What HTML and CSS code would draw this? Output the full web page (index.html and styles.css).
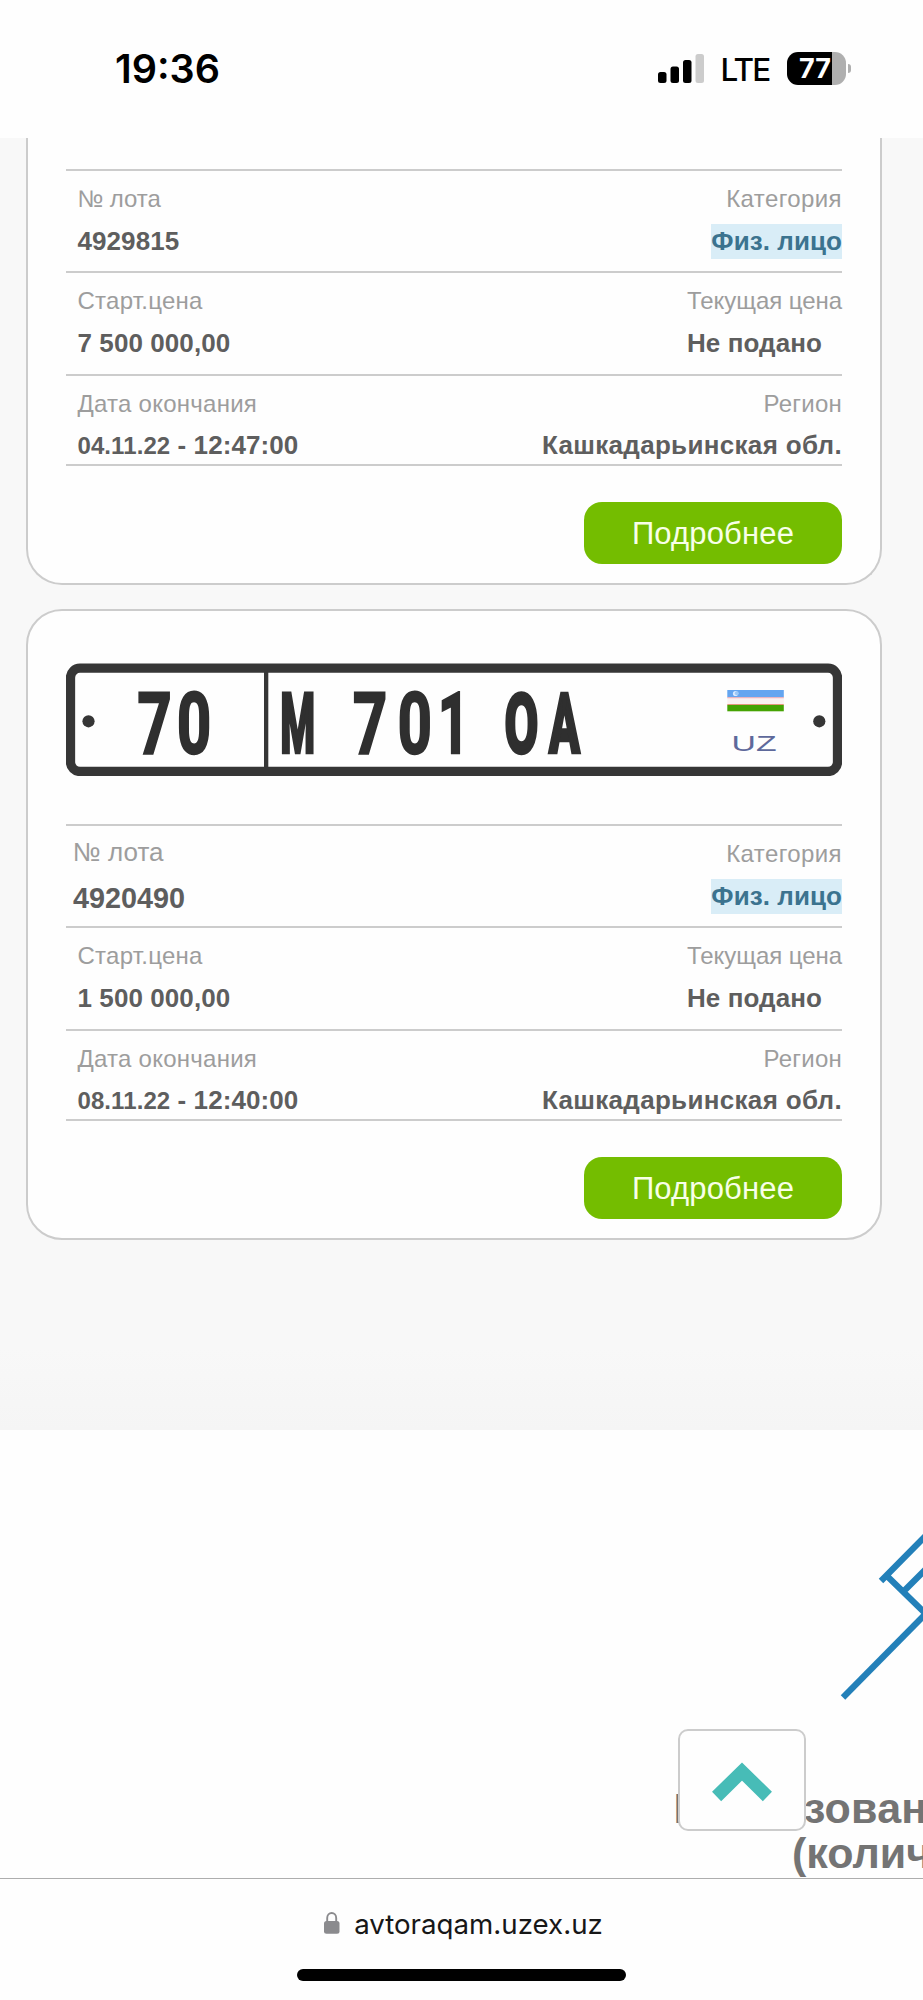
FILE: index.html
```html
<!DOCTYPE html>
<html lang="ru">
<head>
<meta charset="utf-8">
<title>avtoraqam.uzex.uz</title>
<link rel="stylesheet" href="styles.css">
</head>
<body>
<div class="phone">
  <header class="status">
    <span class="time">19:36</span>
    <div class="status-right">
      <svg class="signal" width="46" height="29" viewBox="0 0 46 29"><rect x="0" y="18" width="8.5" height="11" rx="2.5"/><rect x="12.5" y="12.500" width="8.500" height="16.500" rx="2.500"/><rect x="25" y="6" width="8.500" height="23" rx="2.500"/><rect x="37.500" y="0" width="8.500" height="29" rx="2.500" fill="#ccc"/></svg>
      <span class="lte">LTE</span>
      <div class="battery"><span class="battery-level">77</span></div>
      <div class="battery-nub"></div>
    </div>
  </header>

  <main class="lots">
    <article class="card card-first">
      <div class="row">
        <div class="cell"><span class="label snug">№ лота</span><b class="value">4929815</b></div>
        <div class="cell right"><span class="label wide">Категория</span><b class="value"><mark>Физ. лицо</mark></b></div>
      </div>
      <div class="row">
        <div class="cell"><span class="label">Старт.цена</span><b class="value">7 500 000,00</b></div>
        <div class="cell right"><span class="label snug">Текущая цена</span><b class="value inset">Не подано</b></div>
      </div>
      <div class="row row-last">
        <div class="cell"><span class="label">Дата окончания</span><b class="value"><span class="date">04.11.22</span> - 12:47:00</b></div>
        <div class="cell right"><span class="label">Регион</span><b class="value wide">Кашкадарьинская обл.</b></div>
      </div>
      <a class="more">Подробнее</a>
    </article>

    <article class="card card-full">
      <svg class="plate" width="776" height="113" viewBox="66 663 776 113">
        <rect x="70.500" y="668.200" width="767" height="103.300" rx="9.500" fill="#fefefe" stroke="#363636" stroke-width="9.300"/>
        <rect x="264" y="672" width="4.300" height="95" fill="#363636"/>
        <circle cx="88.500" cy="721.300" r="6.100" fill="#363636"/>
        <circle cx="819.300" cy="721.300" r="6.100" fill="#363636"/>
        <g class="plate-text">
          <text transform="translate(154.500 753.200) scale(.7 1)">7</text>
          <text transform="translate(194 753.200) scale(.7 1)">0</text>
          <text class="heavy" transform="translate(297.700 752) scale(.48 1)">M</text>
          <text transform="translate(370 753.200) scale(.7 1)">7</text>
          <text transform="translate(414.700 753.200) scale(.7 1)">0</text>
          <text transform="translate(453.500 753.200) scale(.64 1)">1</text>
          <text class="heavy" transform="translate(521.500 752) scale(.59 1)">O</text>
          <text class="heavy" transform="translate(564.300 752) scale(.55 1)">A</text>
        </g>
        <rect x="727.300" y="690" width="56.500" height="7.500" fill="#64a5f0"/>
        <circle cx="735.500" cy="693.500" r="2.600" fill="#d9eaff"/><circle cx="736.800" cy="693.300" r="2" fill="#9cc8f8"/>
        <rect x="727.300" y="697.300" width="56.500" height="7.200" fill="#fbf1f1"/>
        <rect x="727.300" y="697.200" width="56.500" height="1" fill="#e9a8b4"/>
        <rect x="727.300" y="704" width="56.500" height="1" fill="#e5967c"/>
        <rect x="727.300" y="705" width="56.500" height="6.300" fill="#45a303"/>
        <text class="uz" x="731.500" y="750.500" textLength="45" lengthAdjust="spacingAndGlyphs">UZ</text>
      </svg>
      <div class="row">
        <div class="cell large"><span class="label">№ лота</span><b class="value">4920490</b></div>
        <div class="cell right"><span class="label wide">Категория</span><b class="value"><mark>Физ. лицо</mark></b></div>
      </div>
      <div class="row">
        <div class="cell"><span class="label">Старт.цена</span><b class="value">1 500 000,00</b></div>
        <div class="cell right"><span class="label snug">Текущая цена</span><b class="value inset">Не подано</b></div>
      </div>
      <div class="row row-last">
        <div class="cell"><span class="label">Дата окончания</span><b class="value"><span class="date">08.11.22</span> - 12:40:00</b></div>
        <div class="cell right"><span class="label">Регион</span><b class="value wide">Кашкадарьинская обл.</b></div>
      </div>
      <a class="more">Подробнее</a>
    </article>
  </main>

  <section class="stats">
    <svg class="hammer" width="85" height="170" viewBox="838 1530 85 170" fill="none" stroke="#2380b9" stroke-width="6.300"><path d="M881 1581 926 1535.500M887 1576 926 1614M904 1591 926 1569" /><path d="M926 1613.500 843 1697.500"/></svg>
    <div class="caption"><span class="caption-first">Реализован</span><span class="caption-second">(колич</span></div>
    <a class="to-top"><svg width="62" height="43" viewBox="0 0 62 43"><path d="M5.600 35.500 31 10.500 56.400 35.500" fill="none" stroke="#47bcb7" stroke-width="13"/></svg></a>
  </section>

  <footer class="browser">
    <div class="address">
      <svg width="16" height="22" viewBox="0 0 16 22"><rect x="0" y="9" width="15.500" height="12.700" rx="2.500" fill="#8b8b8e"/><path d="M3.200 10V6a4.500 5 0 0 1 9 0v4" fill="none" stroke="#8b8b8e" stroke-width="1.900"/></svg>
      <span>avtoraqam.uzex.uz</span>
    </div>
    <div class="home"></div>
  </footer>
</div>
</body>
</html>
```
FILE: styles.css
```css
* { box-sizing: border-box; }
body { margin: 0; background: #fefefe; font-family: "Liberation Sans", Arial, sans-serif; }
.phone { width: 923px; height: 2000px; overflow: hidden; display: flex; flex-direction: column; background: #fefefe; }

.status { height: 138px; flex: none; display: flex; justify-content: space-between; padding: 46px 72px 0 115px; font-family: Inter, sans-serif; color: #000; }
.time { font-size: 39.500px; line-height: 47px; font-weight: 600; }
.status-right { display: flex; align-items: flex-start; }
.signal { margin-top: 8px; }
.lte { font-size: 31.500px; line-height: 46px; letter-spacing: -1.800px; margin: 1px 0 0 17px; width: 66.500px; font-weight: 500; }
.battery { width: 59px; height: 33px; margin-top: 6px; border-radius: 11px; background: linear-gradient(90deg, #000 45.500px, #afafaf 45.500px); display: flex; }
.battery-level { color: #fff; font-size: 27px; line-height: 33px; font-weight: 700; padding-left: 12px; }
.battery-nub { width: 3px; height: 9px; margin: 18px 0 0 2px; border-radius: 0 4px 4px 0; background: #afafaf; }

.lots { height: 1292px; flex: none; padding: 0 41px 0 26px; background: linear-gradient(#f8f8f8 1210px, #f5f5f5); }
.card { background: #fefefe; border: 2px solid #ccc; padding: 0 38px; display: flex; flex-direction: column; }
.card-first { height: 447px; border-top: 0; border-radius: 0 0 36px 36px; padding-top: 31px; margin-bottom: 24px; }
.card-full { height: 631px; border-radius: 36px; padding-top: 52px; }
.plate { display: block; margin-bottom: 48px; flex: none; }
.plate-text { font-family: Roboto, sans-serif; font-weight: 700; font-size: 85px; text-anchor: middle; fill: #2f2f2f; stroke: #2f2f2f; stroke-width: 2.400px; }
.plate-text .heavy { font-size: 82px; stroke-width: 4.600px; }
.uz { font-family: "Liberation Sans", sans-serif; font-size: 22px; fill: #5e699b; }

.row { height: 102.300px; flex: none; border-top: 2px solid #ccc; display: flex; justify-content: space-between; }
.row-last { height: 92.500px; border-bottom: 2px solid #ccc; }
.cell { display: flex; flex-direction: column; padding: 12px 0 0 11.500px; white-space: nowrap; }
.right { align-items: flex-end; padding-left: 0; }
.label { font-size: 24px; line-height: 32px; letter-spacing: .25px; color: #9d9d9d; }
.label.snug { letter-spacing: -.05px; }
.label.wide { letter-spacing: .4px; }
.value { font-size: 26px; line-height: 34px; letter-spacing: .08px; margin-top: 8.500px; color: #5e5e5e; }
.value.wide { letter-spacing: .32px; }
.date { font-size: 24px; }
.inset { margin-right: 20px; }
mark { display: inline-block; height: 35px; background: #d9edf7; color: #3b738f; }
.large { padding-left: 7px; padding-top: 9.500px; }
.large .label { font-size: 26px; letter-spacing: 0; }
.large .value { font-size: 28.800px; letter-spacing: 0; margin-top: 13px; }
.more { width: 258px; height: 62px; margin-top: 35.500px; align-self: flex-end; flex: none; border-radius: 18px; background: #74bd00; color: #f8ffe8; font-size: 31px; letter-spacing: .15px; line-height: 64px; text-align: center; }

.stats { position: relative; height: 448px; flex: none; overflow: hidden; display: flex; flex-direction: column; align-items: flex-end; padding-top: 100px; }
.hammer { flex: none; }
.caption { display: flex; flex-direction: column; width: 249px; margin-top: 86px; font-size: 43px; line-height: 45px; font-weight: 700; color: #747474; white-space: nowrap; opacity: .999; }
.caption-first { letter-spacing: .25px; margin-left: -.5px; }
.caption-second { padding-left: 118px; }
.to-top { position: absolute; left: 678px; top: 299px; width: 128px; height: 102px; border: 2px solid #ccc; border-radius: 10px; background: #fefefe; display: flex; justify-content: center; align-items: center; padding-top: 4px; }

.browser { flex: 1; border-top: 1px solid #adadad; display: flex; flex-direction: column; align-items: center; }
.address { display: flex; gap: 14px; align-items: center; height: 40px; margin: 25px 0 0 4px; font-family: Inter, sans-serif; font-size: 27.700px; color: #171717; }
.address svg { margin-bottom: 3px; }
.home { width: 329px; height: 12px; margin-top: 25px; border-radius: 6px; background: #000; }
```
